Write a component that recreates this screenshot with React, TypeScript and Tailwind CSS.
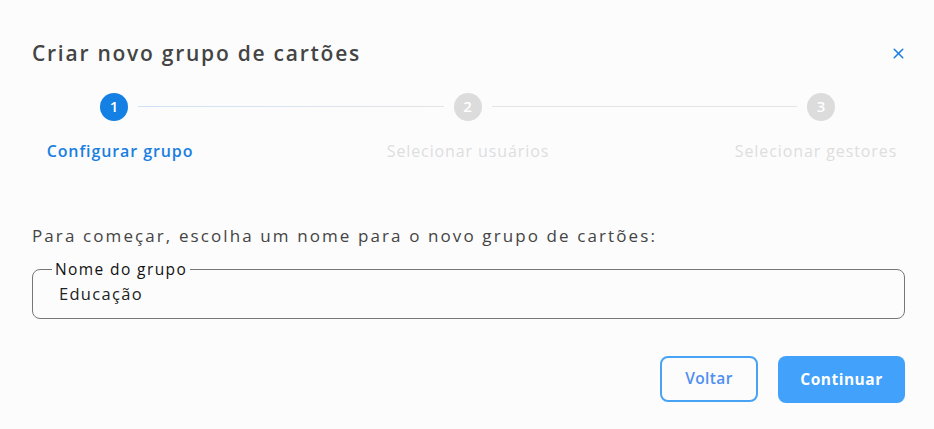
import { X } from "lucide-react";

const font = { fontFamily: "'Open Sans', 'Liberation Sans', sans-serif" };

function Circle({ n, active }: { n: number; active?: boolean }) {
  return (
    <div
      className={`flex h-7 w-7 shrink-0 items-center justify-center rounded-full text-[15px] font-semibold text-white ${
        active ? "bg-[#1480e3]" : "bg-[#dcdcdc]"
      }`}
    >
      {n}
    </div>
  );
}

export default function App() {
  return (
    <div className="min-h-screen bg-[#fcfcfd] px-8 pt-[38px]" style={font}>
      <div className="flex items-center justify-between">
        <h1 className="text-[21px] font-semibold tracking-[1.75px] text-[#444]">
          Criar novo grupo de cartões
        </h1>
        <button className="-mr-[5px] text-[#1a7fe0]">
          <X size={17} strokeWidth={2.2} />
        </button>
      </div>

      <div className="mt-[23px] flex items-center pl-[68px] pr-[67px]">
        <Circle n={1} active />
        <div className="mx-[10px] h-px flex-1 bg-gradient-to-r from-[#cfe2f6] to-[#e4e4e6]" />
        <Circle n={2} />
        <div className="mx-[10px] h-px flex-1 bg-[#e4e4e6]" />
        <Circle n={3} />
      </div>

      <div className="mt-[18px] flex justify-between pl-[3px] pr-[1px] text-[16px] font-semibold tracking-[0.9px]">
        <div className="w-[170px] text-center text-[#1a7fe0]">Configurar grupo</div>
        <div className="w-[170px] text-center font-medium text-[#dedede]">Selecionar usuários</div>
        <div className="w-[170px] text-center font-medium text-[#dedede]">Selecionar gestores</div>
      </div>

      <p className="mt-[60px] text-[17px] tracking-[2.1px] text-[#444]">
        Para começar, escolha um nome para o novo grupo de cartões:
      </p>

      <fieldset className="-mr-[3px] mt-[10px] h-[61px] rounded-lg border border-[#777] px-[19px] pb-0">
        <legend className="px-[3px] text-[15.5px] font-medium tracking-[1.4px] text-[#111]">
          Nome do grupo
        </legend>
        <div className="mt-[1px] pl-[7px] text-[16.5px] tracking-[1.3px] text-[#222]">Educação</div>
      </fieldset>

      <div className="mt-[37px] flex justify-end gap-5">
        <button className="h-[46px] w-[98px] rounded-lg border-2 border-[#49a3f5] text-[15.5px] font-semibold tracking-[0.4px] text-[#4f8ff0]">
          Voltar
        </button>
        <button className="-mr-[3px] h-[47px] w-[127px] rounded-lg bg-[#41a1fb] text-[15.5px] font-bold tracking-[0.5px] text-white">
          Continuar
        </button>
      </div>
    </div>
  );
}
